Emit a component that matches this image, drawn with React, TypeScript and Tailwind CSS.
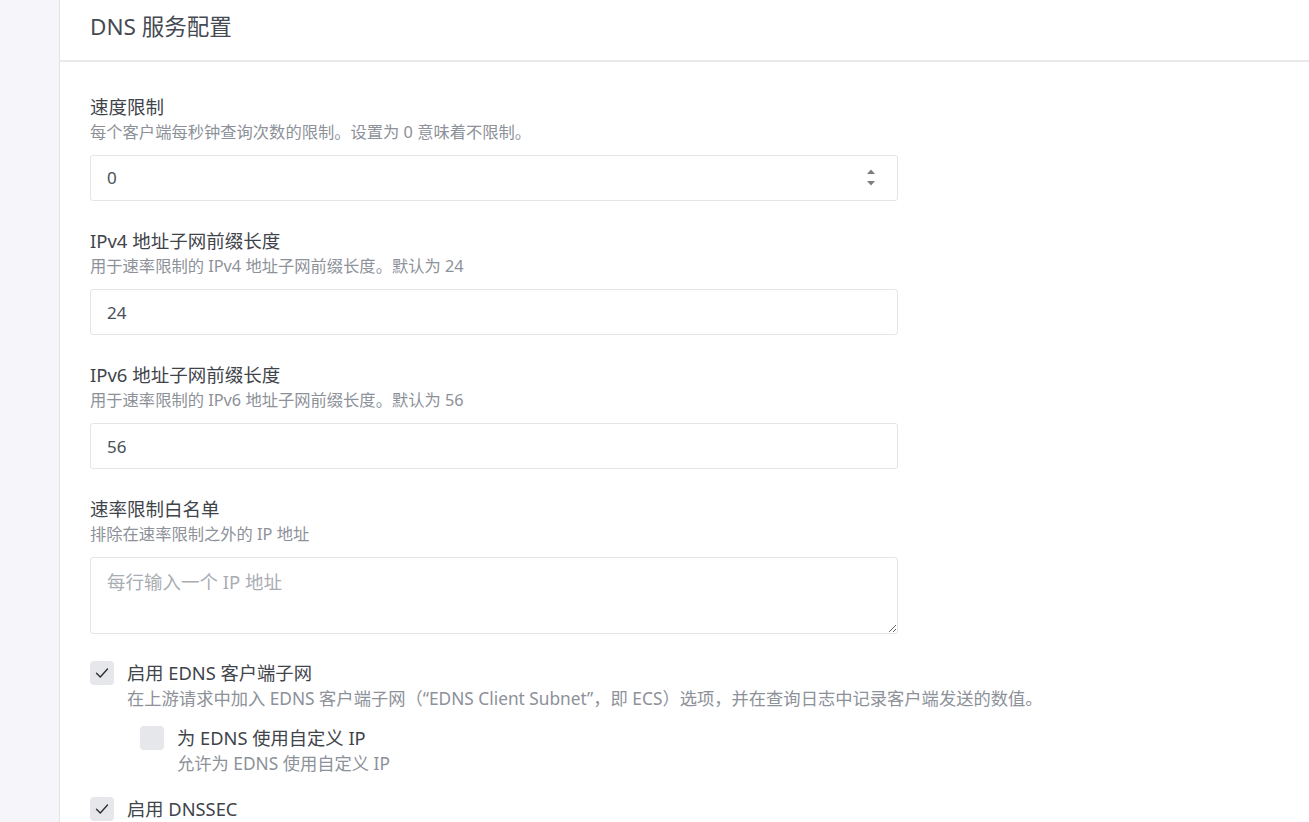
import * as React from "react"

const font = { fontFamily: '"Noto Sans", "Noto Sans CJK SC", sans-serif' }

function Field({ label, desc, children }: { label: string; desc: string; children: React.ReactNode }) {
  return (
    <div className="mb-[26px]">
      <div className="text-[18.5px] leading-[27px] text-[#3f444b]">{label}</div>
      <div className="text-[16.3px] leading-[24px] text-[#8d9199] mb-[11px]">{desc}</div>
      {children}
    </div>
  )
}

function Check({ checked, label, desc }: { checked: boolean; label: string; desc?: string }) {
  return (
    <div className="flex gap-[13px]">
      <div className="w-6 h-6 mt-px shrink-0 rounded-[4px] bg-[#e6e7ea] flex items-center justify-center">
        {checked && (
          <svg width="14" height="14" viewBox="0 0 14 14" fill="none">
            <path d="M1.5 7.2 L5.3 11 L12.5 3" stroke="#2c2f33" strokeWidth="1.4" strokeLinecap="round" strokeLinejoin="round" />
          </svg>
        )}
      </div>
      <div>
        <div className="text-[18.3px] leading-[26px] text-[#3f444b]">{label}</div>
        {desc && <div className="text-[17.3px] leading-[26px] text-[#8d9199]">{desc}</div>}
      </div>
    </div>
  )
}

const inputCls =
  "w-[808px] h-[46px] border border-[#e3e5e8] rounded-[3px] bg-white px-4 text-[17px] text-[#495057] outline-none"

export default function App() {
  return (
    <div className="flex min-h-[822px] bg-[#f5f5fa]" style={font}>
      <div className="w-[60px] shrink-0 border-r border-[#e3e3e8]" />
      <div className="flex-1 bg-white">
        <div className="h-[62px] border-b-2 border-[#e9e9ec] px-[30px] flex items-center">
          <h2 className="text-[22.5px] text-[#454a52] pb-[6px]">DNS 服务配置</h2>
        </div>
        <div className="px-[30px] pt-[31px]">
          <Field label="速度限制" desc="每个客户端每秒钟查询次数的限制。设置为 0 意味着不限制。">
            <div className={inputCls + " flex items-center"}>
              <span className="flex-1">0</span>
              <svg width="12" height="22" viewBox="0 0 12 22" className="mr-[4px]">
                <path d="M2 7 L6 2.5 L10 7 Z" fill="#7d7d7d" />
                <path d="M2 14 L10 14 L6 18.5 Z" fill="#7d7d7d" />
              </svg>
            </div>
          </Field>
          <Field label="IPv4 地址子网前缀长度" desc="用于速率限制的 IPv4 地址子网前缀长度。默认为 24">
            <input className={inputCls} defaultValue="24" />
          </Field>
          <Field label="IPv6 地址子网前缀长度" desc="用于速率限制的 IPv6 地址子网前缀长度。默认为 56">
            <input className={inputCls} defaultValue="56" />
          </Field>
          <Field label="速率限制白名单" desc="排除在速率限制之外的 IP 地址">
            <textarea
              className="block w-[808px] h-[77px] border border-[#e3e5e8] rounded-[3px] bg-white px-4 pt-[10px] pb-2 text-[18.5px] text-[#495057] outline-none placeholder:text-[#a9adb3]"
              placeholder="每行输入一个 IP 地址"
            />
          </Field>
          <div className="mt-[1px]">
            <Check
              checked
              label="启用 EDNS 客户端子网"
              desc="在上游请求中加入 EDNS 客户端子网（“EDNS Client Subnet”，即 ECS）选项，并在查询日志中记录客户端发送的数值。"
            />
            <div className="pl-[50px] mt-[13px]">
              <Check checked={false} label="为 EDNS 使用自定义 IP" desc="允许为 EDNS 使用自定义 IP" />
            </div>
            <div className="mt-[19px]">
              <Check checked label="启用 DNSSEC" />
            </div>
          </div>
        </div>
      </div>
    </div>
  )
}
